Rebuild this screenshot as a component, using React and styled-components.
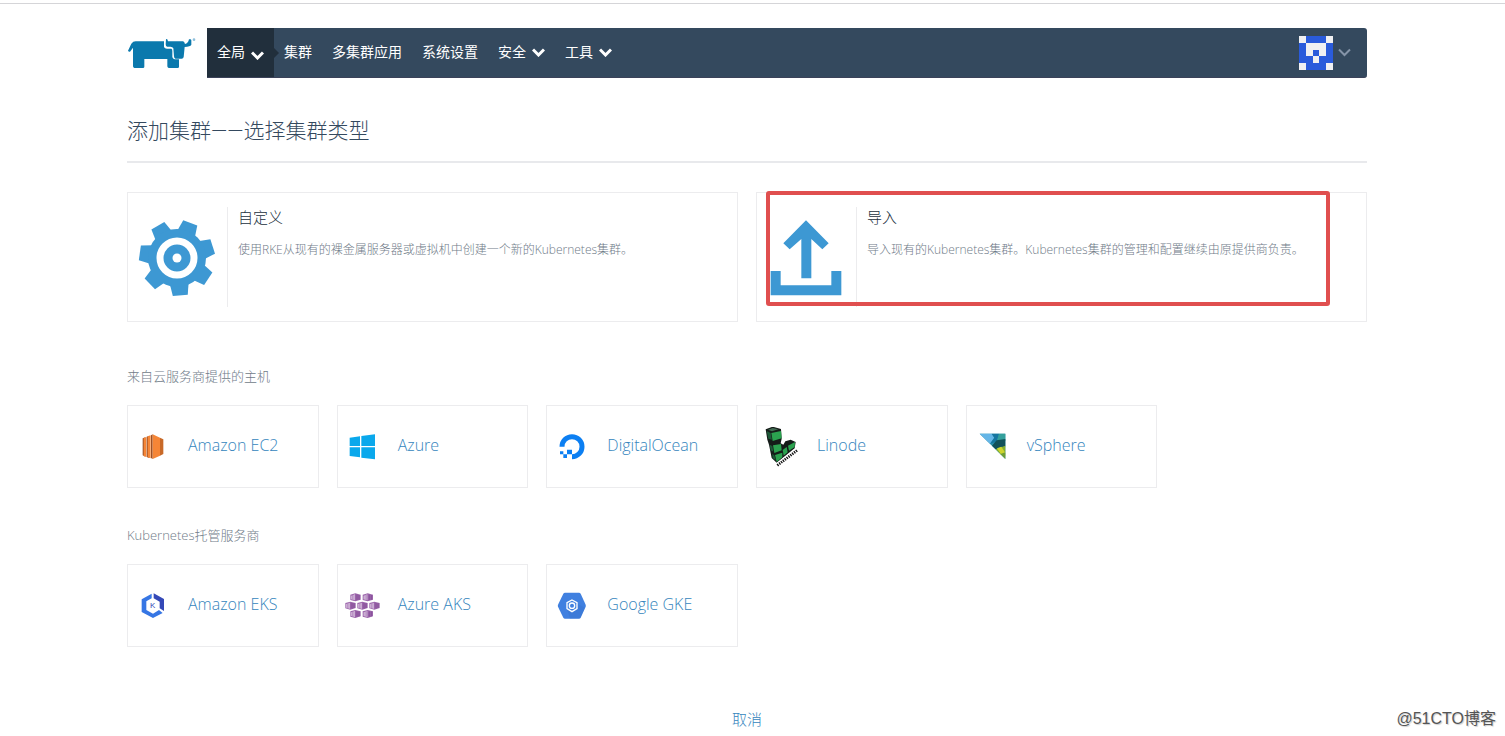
import React from 'react'
import styled, { createGlobalStyle } from 'styled-components'

const gearTeeth = [0, 1, 2, 3, 4, 5, 6].map(n => n * (360 / 7) - 5)

const avatarRows = ['10001', '01110', '01010', '00100', '10001']

const aksCells = [
  [690, 218], [727, 218],
  [675, 243], [711, 243], [747, 243],
  [690, 268], [727, 268],
]

function Chevron({ muted }) {
  return (
    <ChevronIcon viewBox="0 0 13 9" muted={muted ? 1 : 0} aria-hidden="true">
      <path d="M1 1.500L6.500 7L12 1.500" />
    </ChevronIcon>
  )
}

function Cow() {
  return (
    <svg width="70" height="36" viewBox="51 108 210 108" aria-hidden="true">
      <g fill="#0b79ad">
        <path d="M54 155L64 134Q69 127 77 127H162V144Q164 149 171 149H184Q187 150 187 156V174Q188 180 194 181H207V203Q207 207 203 207H176Q172 206 172 202V180H103V203Q103 207 99 207H73Q69 206 69 202V146L60 158Q56 159 54 155Z" />
        <path d="M168 121Q172 117 174 127H219Q223 128 225 135Q234 134 237 121Q244 119 244 124V137Q241 143 224 144L221 174Q220 179 215 179H196Q192 178 192 172L190 148Q188 144 181 143H171Q167 141 167 136Z" />
      </g>
      <circle cx="252" cy="122" r="4" fill="#8fc0dc" />
    </svg>
  )
}

function Avatar() {
  return (
    <svg width="34" height="34" viewBox="0 0 5 5" shapeRendering="crispEdges" aria-hidden="true">
      <rect width="5" height="5" fill="#2a5bdb" />
      {avatarRows.map((row, y) => row.split('').map((cell, x) => (
        cell === '1' && <rect key={`${x}-${y}`} x={x} y={y} width="1" height="1" fill="#f0f0f2" />
      )))}
    </svg>
  )
}

function Gear() {
  return (
    <svg width="80" height="80" viewBox="-40 -40 80 80" aria-hidden="true">
      <g fill="#3d98d3">
        {gearTeeth.map(angle => (
          <path key={angle} d="M-9.500 25L-7.500 37.500H7.500L9.500 25Z" transform={`rotate(${angle})`} />
        ))}
        <circle r="29" />
      </g>
      <circle r="17" fill="none" stroke="#fff" strokeWidth="7" />
      <circle r="4.500" fill="#fff" />
    </svg>
  )
}

function Upload() {
  return (
    <svg width="80" height="80" viewBox="49 101 240 240" aria-hidden="true">
      <path fill="#3d98d3" d="M169 108L237 177L218 195L185 164V282H155V164L120 195L101 177Z" />
      <path fill="#3d98d3" d="M63 260H93V303H245V260H275V333H63Z" />
    </svg>
  )
}

function Ec2() {
  return (
    <Logo viewBox="39 199 120 120" aria-hidden="true">
      <path fill="#9d5025" d="M68 233L76 230V288L68 284Z" />
      <path fill="#f58536" d="M71 232L79 229V289L71 286Z" />
      <path fill="#9d5025" d="M80 228L88 225V292L80 289Z" />
      <path fill="#f58536" d="M83 227L92 224V293L83 290Z" />
      <path fill="#9d5025" d="M93 224L98 221V295L93 292Z" />
      <path fill="#f58536" d="M98 221L120 231V285L98 295Z" />
      <path fill="#c86928" d="M120 231L130 236V280L120 285Z" />
    </Logo>
  )
}

function Windows() {
  return (
    <Logo viewBox="668 199 120 120" aria-hidden="true">
      <path fill="#0aa8ec" d="M688 231L719 227V256H688ZM723 226L764 221V256H723ZM688 260H719V290L688 286ZM723 260H764V296L723 291Z" />
    </Logo>
  )
}

function DigitalOcean() {
  return (
    <Logo viewBox="37 79 120 120" aria-hidden="true">
      <path fill="none" stroke="#0c7ff2" strokeWidth="15" d="M67 138A30 30 0 1 1 97 168" />
      <path fill="#0c7ff2" d="M82 147H97V161H82ZM71 161H82V172H71ZM61 152H71V161H61Z" />
    </Logo>
  )
}

function Linode() {
  return (
    <Logo viewBox="36 79 120 120" aria-hidden="true">
      <path fill="#151c19" d="M47 86L68 78L93 85L95 114L92 128L100 132L106 122L122 117L137 124L134 143L80 186L65 172L57 132L52 117Z" />
      <g fill="#2ba24f">
        <path d="M64 97L93 91L95 113L68 121Z" />
        <path d="M69 134L93 130L95 149L73 157Z" />
        <path d="M75 163L97 156V170L80 184Z" />
        <path d="M98 148L110 139L113 155L101 165Z" />
        <path d="M114 135L135 124L134 139L117 150Z" />
      </g>
      <path fill="#1d5a38" d="M50 91L62 97L66 117L55 114ZM59 132L67 136L70 153L62 149ZM67 160L73 164L77 179L68 172Z" />
      <path fill="#416a52" d="M54 87L68 82L85 86L66 92Z" />
      <path fill="none" stroke="#fff" strokeWidth="4" d="M80 189L139 144" />
      <path fill="none" stroke="#111" strokeWidth="8" strokeDasharray="4 3" d="M82 194L143 148" />
    </Logo>
  )
}

function VSphere() {
  return (
    <Logo viewBox="665 79 120 120" aria-hidden="true">
      <path fill="#288ea9" d="M688 99H765V175Z" />
      <path fill="#65b6e7" d="M688 99H724L732 111L719 129Z" />
      <path fill="#1676a0" d="M724 99H746L739 123L719 129L732 111Z" />
      <path fill="#34a09c" d="M746 99H765V121L739 123Z" />
      <path fill="#12515a" d="M739 119L765 115V137L736 146L725 135Z" />
      <path fill="#86ad2d" d="M736 146L765 135V155L751 161Z" />
      <path fill="#ced52e" d="M740 143L753 138L765 157V165L752 161Z" />
      <path fill="#719e35" d="M750 160L765 155V175Z" />
    </Logo>
  )
}

function Eks() {
  return (
    <Logo viewBox="39 196 120 120" aria-hidden="true">
      <path fill="#3676e4" d="M65 236L95 219V233L79 242V268L99 279L117 268L128 277L99 292L65 274Z" />
      <path fill="#3549b7" d="M101 218L132 235V271L119 263V243L101 233Z" />
      <text x="98" y="263" textAnchor="middle" fill="#3549b7" fontFamily="Liberation Sans" fontSize="24">K</text>
    </Logo>
  )
}

function Aks() {
  return (
    <Logo viewBox="668 196 120 120" aria-hidden="true">
      {aksCells.map(([x, y]) => (
        <g key={`${x}-${y}`} transform={`translate(${x} ${y})`}>
          <path fill="#9b65ab" d="M0 4L15 0L31 4V19L15 24L0 20Z" />
          <path fill="#e3d2e8" d="M3 7L14 3V21L3 18Z" />
          <path stroke="#9b65ab" strokeWidth="2" d="M7 5V19M11 4V20" />
          <path stroke="#7b4690" strokeWidth="2" d="M20 4V20M26 5V19" />
        </g>
      ))}
    </Logo>
  )
}

function Gke() {
  return (
    <Logo viewBox="37 91 120 120" aria-hidden="true">
      <path fill="#4080e0" d="M76 111H118Q121 111 123 114L138 147Q139 150 138 153L123 186Q121 189 118 189H76Q73 189 71 186L55 153Q54 150 55 147L71 114Q73 111 76 111Z" />
      <path fill="#2c64b8" opacity="0.2" d="M111 143L136 157L122 188L91 189L82 160Z" />
      <path fill="#4080e0" stroke="#fff" strokeWidth="4" d="M97 133L112 141V159L97 168L82 159V141Z" />
      <circle cx="97" cy="150" r="8" fill="none" stroke="#fff" strokeWidth="4" />
    </Logo>
  )
}

const hosts = [
  { name: 'Amazon EC2', icon: <Ec2 /> },
  { name: 'Azure', icon: <Windows /> },
  { name: 'DigitalOcean', icon: <DigitalOcean /> },
  { name: 'Linode', icon: <Linode /> },
  { name: 'vSphere', icon: <VSphere /> },
]

const hosted = [
  { name: 'Amazon EKS', icon: <Eks /> },
  { name: 'Azure AKS', icon: <Aks /> },
  { name: 'Google GKE', icon: <Gke /> },
]

function ProviderSection({ title, providers }) {
  return (
    <section>
      <SectionTitle>{title}</SectionTitle>
      <ProviderGrid>
        {providers.map(({ name, icon }) => (
          <ProviderCard href="#" key={name}>
            {icon}
            <ProviderName>{name}</ProviderName>
          </ProviderCard>
        ))}
      </ProviderGrid>
    </section>
  )
}

function TypeCard({ title, description, icon, highlighted }) {
  return (
    <TypeLink href="#">
      <TypeIcon>{icon}</TypeIcon>
      <TypeText>
        <h2>{title}</h2>
        <p>{description}</p>
      </TypeText>
      {highlighted && <Highlight />}
    </TypeLink>
  )
}

function App() {
  return (
    <Page>
      <GlobalStyle />
      <TopLine />
      <Content>
        <Header>
          <Brand href="#" aria-label="Rancher"><Cow /></Brand>
          <Nav>
            <ScopeButton type="button">全局<Chevron /></ScopeButton>
            <NavLink href="#">集群</NavLink>
            <NavLink href="#">多集群应用</NavLink>
            <NavLink href="#">系统设置</NavLink>
            <NavButton type="button">安全<Chevron /></NavButton>
            <NavButton type="button">工具<Chevron /></NavButton>
            <UserButton type="button" aria-label="User"><Avatar /><Chevron muted /></UserButton>
          </Nav>
        </Header>
        <main>
          <Title>添加集群——选择集群类型</Title>
          <TypeGrid>
            <TypeCard
              title="自定义"
              description="使用RKE从现有的裸金属服务器或虚拟机中创建一个新的Kubernetes集群。"
              icon={<Gear />}
            />
            <TypeCard
              title="导入"
              description="导入现有的Kubernetes集群。Kubernetes集群的管理和配置继续由原提供商负责。"
              icon={<Upload />}
              highlighted
            />
          </TypeGrid>
          <ProviderSection title="来自云服务商提供的主机" providers={hosts} />
          <ProviderSection title="Kubernetes托管服务商" providers={hosted} />
        </main>
        <Footer>
          <CancelButton type="button">取消</CancelButton>
        </Footer>
      </Content>
      <Watermark>@51CTO博客</Watermark>
    </Page>
  )
}

export default App

const GlobalStyle = createGlobalStyle`
  * {
    box-sizing: border-box;
  }
  body {
    margin: 0;
    background: #fff;
    font-family: "Open Sans", "Noto Sans CJK SC", sans-serif;
    font-weight: 300;
  }
  button {
    border: 0;
    padding: 0;
    background: none;
    font: inherit;
    cursor: pointer;
  }
  a {
    text-decoration: none;
  }
`

const Page = styled.div`
  position: relative;
  padding-top: 3px;
`

const TopLine = styled.div`
  height: 1px;
  background: #d5d5d8;
`

const Content = styled.div`
  max-width: 1505px;
  margin: 0 auto;
  padding: 24px 138px 7px 127px;
`

const Header = styled.header`
  display: flex;
  height: 50px;
`

const Brand = styled.a`
  display: flex;
  align-items: center;
  flex: 0 0 80px;
`

const Nav = styled.nav`
  display: flex;
  flex: 1;
  background: #34495e;
  border-bottom: 1px solid #3b4259;
  border-radius: 0 3px 3px 0;
`

const NavLink = styled.a`
  display: flex;
  align-items: center;
  padding: 0 10px 3px;
  color: #fff;
  font-size: 14px;
  font-weight: 400;
  white-space: nowrap;
`

const NavButton = styled(NavLink).attrs({ as: 'button' })`
  gap: 6px;

  svg {
    margin-top: 3px;
  }
`

const ScopeButton = styled(NavButton)`
  position: relative;
  background: #212f3c;

  svg {
    margin-top: 8px;
  }

  &::after {
    content: '';
    position: absolute;
    left: 100%;
    top: 20px;
    border: 5px solid transparent;
    border-left-color: #212f3c;
    border-right-width: 0;
  }
`

const UserButton = styled.button`
  display: flex;
  align-items: center;
  gap: 5px;
  margin-left: auto;
  padding-right: 16px;
`

const ChevronIcon = styled.svg`
  width: 13px;
  height: 9px;
  fill: none;
  stroke: ${props => props.muted ? '#8594a8' : '#fff'};
  stroke-width: ${props => props.muted ? 2 : 3};
`

const Title = styled.h1`
  margin: 38px 0 29px;
  padding-bottom: 15px;
  border-bottom: 2px solid #e8e9ec;
  color: #34495e;
  font-family: Roboto, "Noto Sans CJK SC", sans-serif;
  font-size: 21px;
  font-weight: 300;
  line-height: 30px;
`

const TypeGrid = styled.div`
  display: grid;
  grid-template-columns: 1fr 1fr;
  gap: 18px;
  margin-bottom: 44px;
`

const TypeLink = styled.a`
  position: relative;
  display: flex;
  min-height: 130px;
  padding: 14px 0;
  border: 1px solid #ececee;
`

const TypeIcon = styled.div`
  display: flex;
  align-items: center;
  justify-content: center;
  flex: 0 0 100px;
  padding: 2px 2px 0 0;
  border-right: 1px solid #ececee;
`

const TypeText = styled.div`
  padding: 0 10px;

  h2 {
    margin: 0 0 12px;
    color: #22303d;
    font-size: 15px;
    font-weight: 300;
    line-height: 20px;
  }
  p {
    margin: 0;
    color: #6f7b88;
    font-size: 12px;
    line-height: 22px;
  }
`

/* red frame over the recommended type */
const Highlight = styled.span`
  position: absolute;
  top: -2px;
  right: 36px;
  bottom: 15px;
  left: 9px;
  border: 4px solid #e04f4f;
  border-radius: 3px;
  pointer-events: none;
`

const SectionTitle = styled.h2`
  margin: 0 0 19px;
  color: #6f7b88;
  font-size: 13px;
  font-weight: 300;
  line-height: 20px;
`

const ProviderGrid = styled.div`
  display: grid;
  grid-template-columns: repeat(6, 1fr);
  gap: 18px;
  margin-bottom: 37px;
`

const ProviderCard = styled.a`
  display: flex;
  align-items: center;
  gap: 15px;
  height: 83px;
  padding: 0 5px;
  border: 1px solid #ececee;
  color: #3585bd;
  font-size: 16px;
`

const ProviderName = styled.span`
  padding-bottom: 3px;
  white-space: nowrap;
`

const Logo = styled.svg`
  flex: none;
  width: 40px;
  height: 40px;
`

const Footer = styled.footer`
  display: flex;
  justify-content: center;
  padding-top: 25px;
`

const CancelButton = styled.button`
  && {
    color: #3585bd;
    font-size: 15px;
    line-height: 20px;
  }
`

const Watermark = styled.div`
  position: absolute;
  right: 9px;
  bottom: 7px;
  color: #555;
  font-family: "Liberation Sans", "Noto Sans CJK SC", sans-serif;
  font-size: 16px;
  font-weight: 400;
  line-height: 20px;
  text-shadow: 1px 1px 1px #ccc;
`
